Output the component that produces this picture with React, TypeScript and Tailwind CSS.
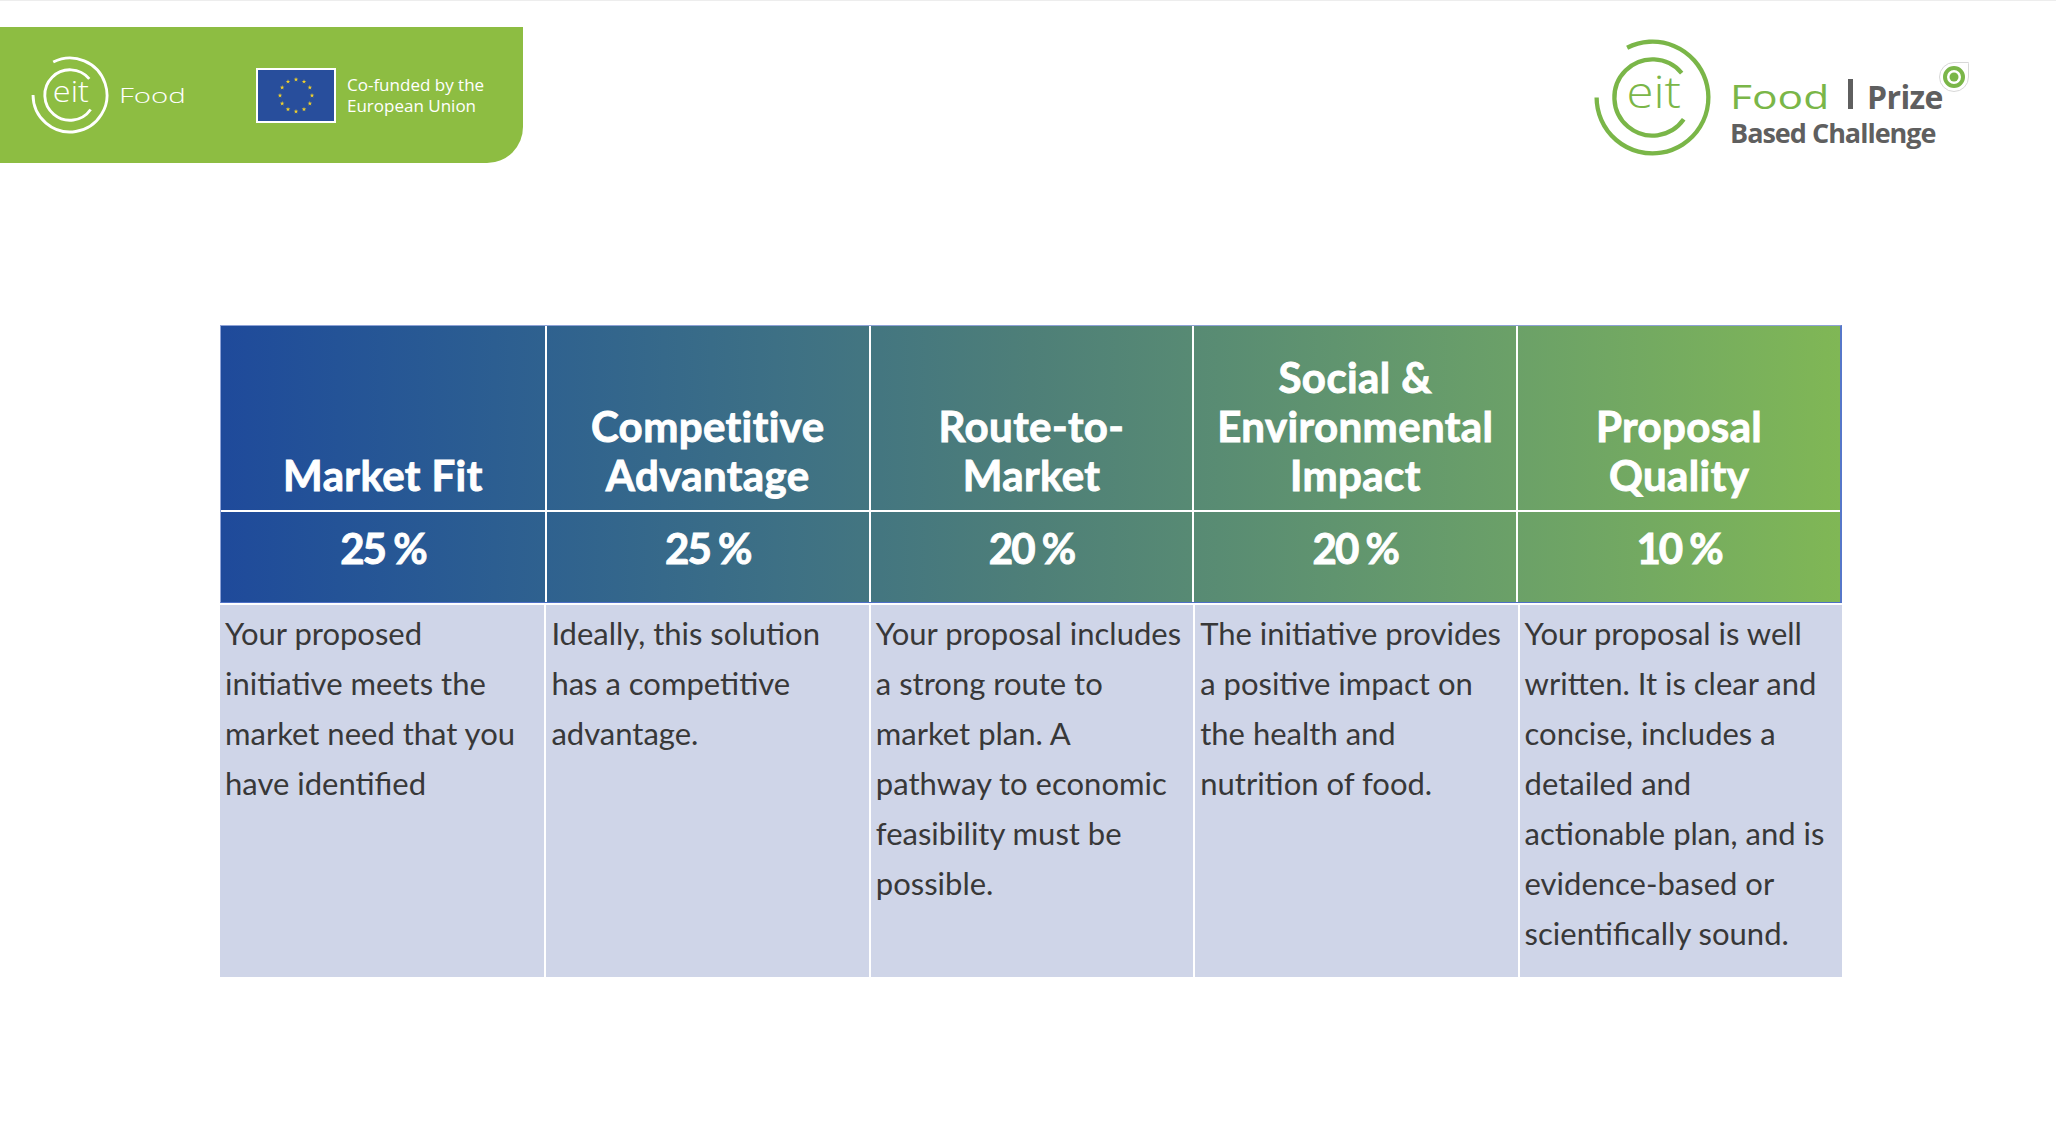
import React from "react";

const EitMark = ({ color, size, strokeW }: { color: string; size: number; strokeW: number }) => (
  <svg width={size} height={size} viewBox="0 0 100 100" className="shrink-0">
    <path d="M30.03 10.8 A44 44 0 1 1 6 50" fill="none" stroke={color} strokeWidth={strokeW} strokeLinecap="butt" />
    <path d="M72.98 30.72 A30 30 0 1 0 74.57 67.21" fill="none" stroke={color} strokeWidth={strokeW} strokeLinecap="butt" />
    <text
      x="29.5"
      y="58"
      fill={color}
      fontSize="35"
      fontWeight={300}
      fontFamily="'Open Sans', sans-serif"
      textLength="43"
      lengthAdjust="spacingAndGlyphs"
    >
      eit
    </text>
  </svg>
);

const EuFlag = () => {
  const stars = Array.from({ length: 12 }, (_, i) => {
    const a = (i * 30 * Math.PI) / 180;
    return { x: 40 + 16 * Math.cos(a), y: 27.5 + 16 * Math.sin(a) };
  });
  return (
    <svg width="80" height="55" viewBox="0 0 80 55" className="shrink-0">
      <rect x="0" y="0" width="80" height="55" fill="#ffffff" />
      <rect x="2" y="2" width="76" height="51" fill="#284e9c" />
      {stars.map((s, i) => (
        <polygon
          key={i}
          transform={`translate(${s.x} ${s.y}) scale(2.4)`}
          points="0,-1 0.2245,-0.309 0.951,-0.309 0.363,0.118 0.588,0.809 0,0.382 -0.588,0.809 -0.363,0.118 -0.951,-0.309 -0.2245,-0.309"
          fill="#f3d22a"
        />
      ))}
    </svg>
  );
};

const headers = [
  ["Market Fit"],
  ["Competitive", "Advantage"],
  ["Route-to-", "Market"],
  ["Social &", "Environmental", "Impact"],
  ["Proposal", "Quality"],
];

const percents = ["25 %", "25 %", "20 %", "20 %", "10 %"];

const bodies = [
  ["Your proposed", "initiative meets the", "market need that you", "have identified"],
  ["Ideally, this solution", "has a competitive", "advantage."],
  ["Your proposal includes", "a strong route to", "market plan. A", "pathway to economic", "feasibility must be", "possible."],
  ["The initiative provides", "a positive impact on", "the health and", "nutrition of food."],
  [
    "Your proposal is well",
    "written. It is clear and",
    "concise, includes a",
    "detailed and",
    "actionable plan, and is",
    "evidence-based or",
    "scientifically sound.",
  ],
];

export default function App() {
  return (
    <div className="w-[2056px] h-[1148px] bg-white overflow-hidden border-t border-[#ededed] font-['Lato',sans-serif]">
      {/* Top header */}
      <div className="flex items-start h-[162px]">
        {/* Green bar */}
        <div className="mt-[26px] w-[523px] h-[136px] bg-[#8dbd42] rounded-br-[36px] flex items-start shrink-0">
          <div className="ml-[28px] mt-[26px]">
            <EitMark color="#ffffff" size={84} strokeW={3.4} />
          </div>
          <div className="ml-[7px] mt-[58px] w-[67px] shrink-0">
            <span className="inline-block origin-left scale-x-[1.4] font-['Open_Sans',sans-serif] font-light text-[21px] leading-[21px] text-white">
              Food
            </span>
          </div>
          <div className="ml-[70px] mt-[41px]">
            <EuFlag />
          </div>
          <div className="ml-[11px] mt-[47px] font-['Open_Sans',sans-serif] text-[17px] leading-[21px] text-white whitespace-nowrap">
            <div>Co-funded by the</div>
            <div>European Union</div>
          </div>
        </div>

        {/* Right logo */}
        <div className="relative ml-[1066px] mt-[33px] flex items-start shrink-0">
          <EitMark color="#7ab648" size={127} strokeW={3.4} />
          <div className="ml-[14px] mt-[45px] flex flex-col">
            <div className="flex items-start h-[37px]">
              <div className="w-[100px] mt-[1px] shrink-0">
                <span className="inline-block origin-left scale-x-[1.29] font-['Open_Sans',sans-serif] font-normal text-[33px] leading-[33px] text-[#7ab648]">
                  Food
                </span>
              </div>
              <div className="ml-[18px] w-[5px] h-[30px] bg-[#5f5f5f]" />
              <div className="ml-[14px] mt-[2px] font-['Open_Sans',sans-serif] font-bold text-[32px] leading-[32px] tracking-[-0.6px] text-[#5f5f5f]">
                Prize
              </div>
            </div>
            <div className="mt-[3px] font-['Open_Sans',sans-serif] font-bold text-[27px] leading-[27px] tracking-[-1px] text-[#5f5f5f] whitespace-nowrap">
              Based Challenge
            </div>
          </div>
          <svg width="34" height="34" viewBox="0 0 34 34" className="absolute left-[349px] top-[27px]">
            <path d="M30.5 2.5 L30.5 16 A14.5 14.5 0 1 1 16 1.5 L30.5 1.5 Z" fill="#ffffff" stroke="#d8d8d8" strokeWidth="1" />
            <circle cx="16" cy="16" r="9" fill="none" stroke="#7ab648" strokeWidth="4" />
            <circle cx="16" cy="16" r="4.5" fill="#7ab648" />
          </svg>
        </div>
      </div>

      {/* Table */}
      <div className="ml-[220px] mt-[162px] w-[1622px]">
        <div className="bg-gradient-to-r from-[#1f4a9b] via-[#4e7f78] to-[#80b755] border border-[#8ea2d6] border-r-2 border-r-[#5677c9] border-b-[#4d70c6]">
          <div className="grid grid-cols-5 h-[184px]">
            {headers.map((lines, i) => (
              <div
                key={i}
                className={`flex flex-col items-center justify-end pb-[10px] text-white font-bold text-[42px] leading-[49px] tracking-[0.4px] [-webkit-text-stroke:0.9px_#ffffff] text-center whitespace-nowrap ${
                  i > 0 ? "border-l-2 border-white" : ""
                }`}
              >
                {lines.map((l) => (
                  <div key={l}>{l}</div>
                ))}
              </div>
            ))}
          </div>
          <div className="h-[2px] bg-white" />
          <div className="grid grid-cols-5 h-[90px]">
            {percents.map((p, i) => (
              <div
                key={i}
                className={`flex justify-center pt-[12px] text-white font-bold text-[42px] leading-[49px] tracking-[-2px] [-webkit-text-stroke:0.9px_#ffffff] ${
                  i > 0 ? "border-l-2 border-white" : ""
                }`}
              >
                {p}
              </div>
            ))}
          </div>
        </div>
        <div className="h-[2px] bg-white" />
        <div className="grid grid-cols-5 h-[372px] bg-[#cfd5e8]">
          {bodies.map((lines, i) => (
            <div
              key={i}
              className={`pl-[5px] pt-[3px] text-[#383838] text-[31px] leading-[50px] whitespace-nowrap ${
                i > 0 ? "border-l-2 border-white" : ""
              }`}
            >
              {lines.map((l) => (
                <div key={l}>{l}</div>
              ))}
            </div>
          ))}
        </div>
      </div>
    </div>
  );
}
